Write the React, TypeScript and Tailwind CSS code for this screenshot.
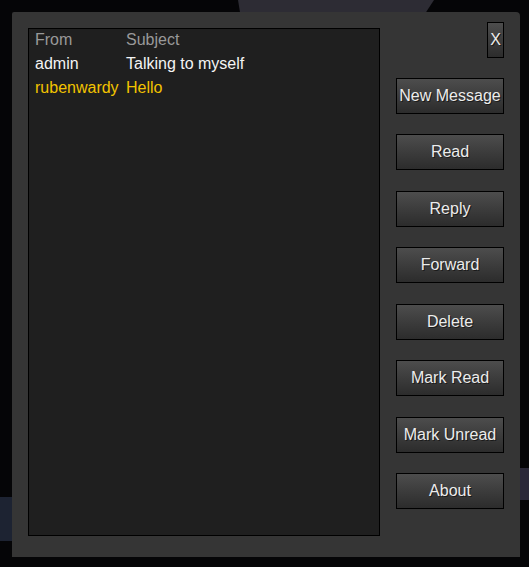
import React from "react";

type Message = { from: string; subject: string; unread: boolean };

const messages: Message[] = [
  { from: "admin", subject: "Talking to myself", unread: false },
  { from: "rubenwardy", subject: "Hello", unread: true },
];

const actions = ["New Message", "Read", "Reply", "Forward", "Delete", "Mark Read", "Mark Unread", "About"];

function Button({ label, className = "" }: { label: string; className?: string }) {
  return (
    <button
      className={`h-[36px] shrink-0 border border-black bg-gradient-to-b from-[#4d4d4d] to-[#2c2c2c] text-[16px] text-[#ececec] [text-shadow:1px_1px_0_#1a1a1a] ${className}`}
    >
      {label}
    </button>
  );
}

export default function App() {
  return (
    <div
      className="relative w-[529px] h-[567px] overflow-hidden bg-[#050507] pt-[12px] pl-[12px]"
      style={{ fontFamily: '"Liberation Sans", Arial, sans-serif' }}
    >
      {/* game scene behind the formspec */}
      <div className="absolute left-[238px] top-0 w-[196px] h-[12px] bg-[#2d2c34] [clip-path:polygon(0_0,100%_0,96%_100%,1%_100%)]" />
      <div className="absolute left-0 top-[497px] w-[12px] h-[44px] bg-[#1d2332]" />
      <div className="absolute left-[520px] top-[468px] w-[9px] h-[32px] bg-[#2a2838]" />

      <div className="relative flex gap-[16px] w-[508px] h-[545px] bg-[#353535] rounded-tr-[4px] rounded-tl-[2px] pt-[9.6px] pl-[16px]">
        <div className="mt-[6.4px] w-[352px] h-[508px] border border-black bg-[#1f1f1f] pl-[6px] text-[16px] leading-[24px] -space-y-0">
          <div className="flex -mt-[1px] text-[#999999]">
            <span className="w-[91px]">From</span>
            <span>Subject</span>
          </div>
          {messages.map((m, i) => (
            <div key={i} className={`flex ${m.unread ? "text-[#f2c300]" : "text-[#f4f4f4]"}`}>
              <span className="w-[91px]">{m.from}</span>
              <span>{m.subject}</span>
            </div>
          ))}
        </div>

        <div className="flex flex-col items-end gap-[20.43px] w-[108px]">
          <Button label="X" className="w-[17px] px-0" />
          {actions.map((a) => (
            <Button key={a} label={a} className="w-[108px] px-0" />
          ))}
        </div>
      </div>
    </div>
  );
}
